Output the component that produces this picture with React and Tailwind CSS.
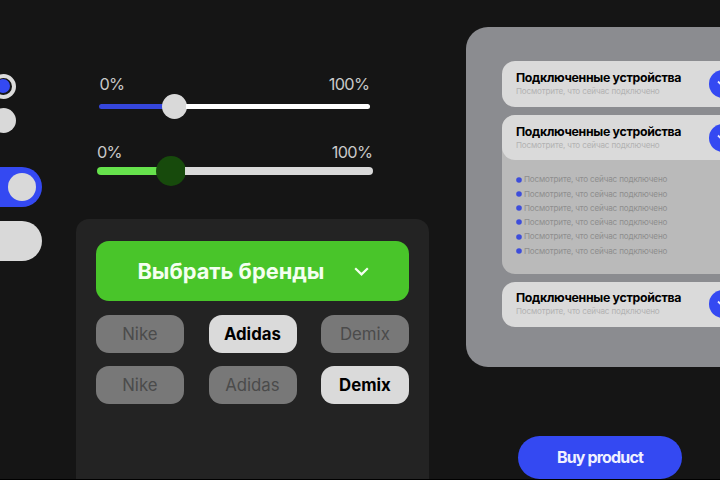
import clsx from "clsx";

/* ---------- Constants ---------- */
const BRAND_ROWS = [
  { brands: ["Nike", "Adidas", "Demix"], active: "Adidas" },
  { brands: ["Nike", "Adidas", "Demix"], active: "Demix" },
];

const HINT = "Посмотрите, что сейчас подключено";
const DEVICES = [HINT, HINT, HINT, HINT, HINT, HINT];

/* ---------- Radios and switches ---------- */
function Toggles() {
  return (
    <div className="flex w-[76.4px] shrink-0 flex-col pt-[73.5px]">
      <div className="-ml-[9.5px] flex size-[25px] items-center justify-center rounded-full border-[4px] border-[#dcdcdc] bg-[#161616]">
        <div className="size-[13.5px] rounded-full bg-[#3449f2]" />
      </div>
      <div className="-ml-[9.5px] mt-[9px] size-[25px] rounded-full bg-[#d9d9d9]" />

      <div className="-ml-[40px] mt-[34.5px] flex h-10 w-[82px] items-center justify-end rounded-full bg-[#3449f2] pr-[6px]">
        <div className="size-[28px] rounded-full bg-[#d9d9d9]" />
      </div>
      <div className="-ml-[40px] mt-[13.5px] h-10 w-[82px] rounded-full bg-[#d9d9d9]" />
    </div>
  );
}

/* ---------- Sliders ---------- */
function SliderLabels() {
  return (
    <div className="flex justify-between pr-px text-[16.3px] leading-5 tracking-[-0.6px] text-[#c9c9c9]">
      <span>0%</span>
      <span>100%</span>
    </div>
  );
}

function Sliders() {
  return (
    <div className="flex h-[218.5px] flex-col pt-[74px]">
      <div className="ml-[23px] w-[271px]">
        <SliderLabels />
        <div className="-mt-[0.5px] flex h-[25px] items-center">
          <div className="h-[5px] w-[64px] rounded-l-full bg-[#3546dc]" />
          <div className="-mx-px size-[25px] rounded-full bg-[#d9d9d9]" />
          <div className="h-[5px] flex-1 rounded-r-full bg-white" />
        </div>
      </div>

      <div className="ml-[20.5px] mt-[23.5px] w-[276.5px]">
        <SliderLabels />
        <div className="-mt-[6px] flex h-[30px] items-center">
          <div className="h-[8.5px] w-[60.5px] rounded-l-full bg-[#66e24c]" />
          <div className="-mx-px size-[30px] rounded-full bg-[#174a0c]" />
          <div className="h-[8.5px] flex-1 rounded-r-full bg-[#d9d9d9]" />
        </div>
      </div>
    </div>
  );
}

/* ---------- Brand filter ---------- */
function BrandPanel() {
  return (
    <div className="flex-1 rounded-t-[13px] bg-[#232323] px-5 pt-[22.5px]">
      <button className="flex h-[60px] w-full items-center justify-between rounded-[13px] bg-[#49c52a] pl-[41px] pr-[40px] text-[21.8px] font-bold text-[#f4fff0]">
        <span className="whitespace-nowrap">Выбрать бренды</span>
        <svg width="15" height="9" viewBox="0 0 15 9" fill="none">
          <path d="M1.2 1.2 7.5 7.4l6.3-6.2" stroke="currentColor" strokeWidth="2.2" />
        </svg>
      </button>

      <div className="mt-[14px] flex flex-col gap-[13px]">
        {BRAND_ROWS.map((row, i) => (
          <div key={i} className="flex justify-between">
            {row.brands.map((brand) => (
              <button
                key={brand}
                className={clsx(
                  "h-[38px] w-[88px] rounded-[13px] pr-px pt-[2px] text-[16.8px]",
                  brand === row.active
                    ? "bg-[#dadada] font-bold text-black"
                    : "bg-[#787878] text-[#4b4b4b]"
                )}
              >
                {brand}
              </button>
            ))}
          </div>
        ))}
      </div>
    </div>
  );
}

/* ---------- Connected devices ---------- */
function DeviceHeader() {
  return (
    <div className="flex h-[45.5px] w-[250px] items-center justify-between rounded-[13px] bg-[#dadada] pl-[14px] pr-[15px]">
      <div className="whitespace-nowrap">
        <h3 className="text-[12.3px] font-bold leading-[14px] tracking-[-0.3px] text-black">
          Подключенные устройства
        </h3>
        <p className="text-[8.1px] leading-[12px] tracking-[-0.15px] text-[#b2b2b2]">{HINT}</p>
      </div>
      <div className="flex size-[28px] shrink-0 items-center justify-center rounded-full bg-[#3449f2]">
        <svg width="12" height="8" viewBox="0 0 12 8" fill="none">
          <path d="M1 1.5 6 6.5l5-5" stroke="#e8e8ff" strokeWidth="1.8" />
        </svg>
      </div>
    </div>
  );
}

function DevicesPanel() {
  return (
    <div className="flex h-[339.5px] w-[322px] flex-col gap-[8px] rounded-[22px] bg-[#8b8c90] pl-9 pt-[34.4px]">
      <DeviceHeader />
      <div className="h-[158.7px] w-[250px] rounded-[13px] bg-[#bababa]">
        <DeviceHeader />
        <ul className="mt-[12px] pl-[14px]">
          {DEVICES.map((text, i) => (
            <li
              key={i}
              className="flex h-[14.25px] items-center gap-[2px] whitespace-nowrap text-[8.1px] tracking-[-0.16px] text-[#8e8e8e]"
            >
              <svg width="6" height="6" viewBox="0 0 6 6" className="shrink-0">
                <circle cx="3" cy="3" r="2.8" fill="#3d4ddb" />
              </svg>
              {text}
            </li>
          ))}
        </ul>
      </div>
      <DeviceHeader />
    </div>
  );
}

export default function App() {
  return (
    <div className="flex h-[480px] w-[720px] overflow-hidden border-b border-black bg-[#151515] font-['Inter',sans-serif]">
      <Toggles />

      <div className="flex w-[353px] shrink-0 flex-col">
        <Sliders />
        <BrandPanel />
      </div>

      <div className="ml-[36.6px] shrink-0 pt-[27px]">
        <DevicesPanel />
        <button className="ml-[52px] mt-[69.5px] h-[43px] w-[164px] rounded-full bg-[#3449f2] pb-[2px] text-[16px] font-bold tracking-[-0.85px] text-[#f0f1ff]">
          Buy product
        </button>
      </div>
    </div>
  );
}
